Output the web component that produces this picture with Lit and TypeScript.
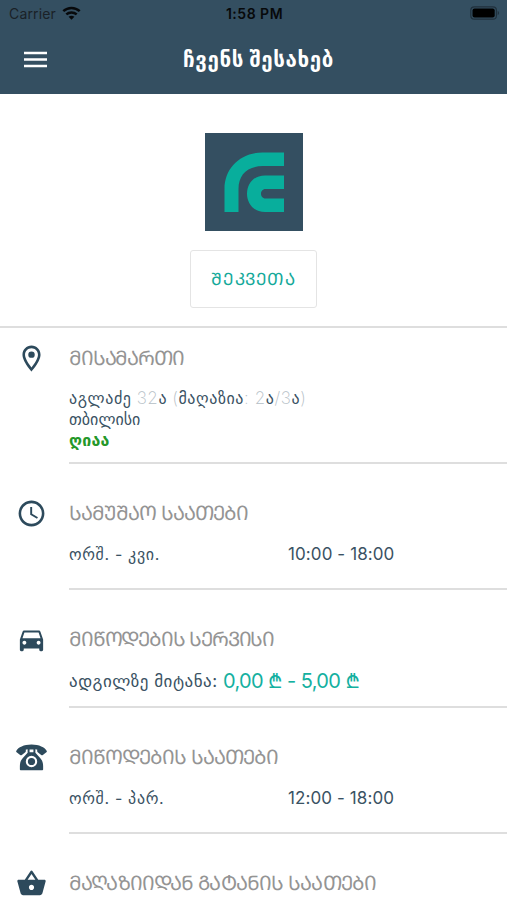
import { LitElement, html, css, svg } from "lit";
import { customElement, property } from "lit/decorators.js";

const ICONS: Record<string, unknown> = {
  pin: svg`<path d="M12 2C8.130 2 5 5.130 5 9c0 5.250 7 13 7 13s7-7.750 7-13c0-3.870-3.130-7-7-7zM7 9c0-2.760 2.240-5 5-5s5 2.240 5 5c0 2.880-2.880 7.190-5 9.880C9.920 16.210 7 11.850 7 9z"/><circle cx="12" cy="9" r="2.500"/>`,
  clock: svg`<path d="M11.990 2C6.470 2 2 6.480 2 12s4.470 10 9.990 10C17.520 22 22 17.520 22 12S17.520 2 11.990 2zM12 20c-4.420 0-8-3.580-8-8s3.580-8 8-8 8 3.580 8 8-3.580 8-8 8zm.5-13H11v6l5.250 3.150.75-1.230-4.500-2.670z"/>`,
  car: svg`<path d="M18.920 6.010C18.720 5.420 18.160 5 17.500 5h-11c-.66 0-1.210.42-1.420 1.010L3 12v8c0 .55.45 1 1 1h1c.55 0 1-.45 1-1v-1h12v1c0 .55.45 1 1 1h1c.55 0 1-.45 1-1v-8l-2.080-5.990zM6.500 16c-.83 0-1.500-.67-1.500-1.500S5.670 13 6.500 13s1.500.67 1.500 1.500S7.330 16 6.500 16zm11 0c-.83 0-1.500-.67-1.500-1.500s.67-1.500 1.500-1.500 1.500.67 1.500 1.500-.67 1.500-1.500 1.500zM5 11l1.500-4.500h11L19 11H5z"/>`,
  phone: svg`<path fill-rule="evenodd" d="M12 2C6 2 1.700 4.300.3 6.800c-.3.500-.2.900.2 1.200l2.700 2.100c.4.300.9.300 1.300 0l2.700-2.100c.3-.3.400-.6.400-1V5.900c.5-.1.900-.2 1.400-.3v2.800L5.300 12.400C3.600 14.200 3 16.300 3 18.500V21c0 .6.300.9.900.9h16.200c.6 0 .9-.3.900-.9v-2.500c0-2.200-.6-4.300-2.300-6.100L15 8.400V5.600c.5.100.9.200 1.400.3V7c0 .4.100.7.400 1l2.700 2.100c.4.300.9.300 1.300 0L23.500 8c.4-.3.500-.7.200-1.200C22.300 4.300 18 2 12 2zM10.500 5.800h3v2.200h-3zM12 10.700a4.400 4.400 0 1 1 0 8.800 4.400 4.400 0 0 1 0-8.800zm0 1.600a2.800 2.800 0 1 0 0 5.600 2.800 2.800 0 0 0 0-5.600z"/><circle cx="12" cy="15.100" r="1.300"/>`,
  basket: svg`<path d="M17.210 9l-4.380-6.560c-.19-.28-.51-.42-.83-.42-.32 0-.64.14-.83.430L6.790 9H2c-.55 0-1 .45-1 1 0 .09.010.18.040.27l2.540 9.270c.23.840 1 1.460 1.920 1.460h13c.92 0 1.690-.62 1.930-1.460l2.540-9.270L23 10c0-.55-.45-1-1-1h-4.790zM9 9l3-4.400L15 9H9zm3 8c-1.100 0-2-.9-2-2s.9-2 2-2 2 .9 2 2-.9 2-2 2z"/>`,
};

@customElement("info-section")
class InfoSection extends LitElement {
  @property() icon = "";
  @property() heading = "";

  static styles = css`
    :host { display: flex; flex: none; box-sizing: border-box; padding-top: 36px; }
    .icon { flex: none; width: 31px; height: 31px; margin: -2px 22px 0 16px; fill: #2d4a5c; }
    .main { flex: 1; min-width: 0; box-sizing: border-box; border-bottom: 2px solid #dedede; }
    .heading { height: 26px; line-height: 26px; font-size: 20px; color: #949494; white-space: nowrap; letter-spacing: var(--heading-spacing, 0); }
  `;

  render() {
    return html`
      <svg class="icon" viewBox="0 0 24 24">${ICONS[this.icon]}</svg>
      <div class="main">
        <div class="heading">${this.heading}</div>
        <slot></slot>
      </div>
    `;
  }
}

@customElement("app-root")
class AppRoot extends LitElement {
  static styles = css`
    :host { display: flex; flex-direction: column; height: 900px; overflow: hidden; background: #fff; color: #3a5263; font-family: Inter, "DejaVu Sans", sans-serif; font-size: 16px; }
    .status { flex: none; display: grid; grid-template-columns: 1fr auto 1fr; align-items: center; height: 28px; padding: 0 7px 2px 9px; box-sizing: border-box; background: #344f61; color: #07090b; font-size: 14px; }
    .carrier { display: flex; align-items: center; gap: 6px; letter-spacing: 0.15px; color: #1a2127; }
    .wifi { width: 19px; height: 14px; }
    .time { font-weight: 600; font-size: 14px; letter-spacing: 0.5px; }
    .battery { justify-self: end; width: 30px; height: 14px; }
    .bar { flex: none; display: grid; grid-template-columns: 60px 1fr 60px; align-items: center; height: 66px; box-sizing: border-box; padding-bottom: 3px; background: #344f61; color: #fff; }
    .menu { width: 23px; height: 17px; margin-left: 24px; }
    .title { text-align: center; padding-left: 10px; font-size: 20.5px; letter-spacing: 0.6px; font-weight: 700; white-space: nowrap; }
    .hero { display: flex; flex-direction: column; align-items: center; height: 234px; flex: none; box-sizing: border-box; padding-top: 39px; border-bottom: 2px solid #dedede; }
    .logo { width: 98px; height: 98px; }
    .order { display: flex; align-items: center; justify-content: center; width: 127px; height: 58px; margin-top: 19px; border: 1px solid #e4e4e4; border-radius: 3px; background: #fff; padding: 0 0 2px; font: inherit; font-size: 17px; letter-spacing: 0.6px; color: #14a99a; box-sizing: border-box; }
    .address { height: 136px; padding-top: 17px; --heading-spacing: -1.15px; }
    .hours { height: 126px; }
    .working { --heading-spacing: -0.95px; }
    .delivery { --heading-spacing: -1px; }
    .service { height: 118px; --heading-spacing: -1.15px; }
    .last { height: 126px; --heading-spacing: -0.85px; }
    .lines { padding-top: 17px; line-height: 21px; white-space: nowrap; }
    .street { letter-spacing: 0.58px; }
    .faint { color: #b4bec6; font-weight: 200; font-size: 17px; }
    .open { color: #25982a; font-weight: 700; letter-spacing: 0.2px; }
    .slot { display: flex; padding-top: 16px; line-height: 24px; white-space: nowrap; }
    .days { width: 219px; letter-spacing: 0.65px; }
    .clock { font-size: 17px; letter-spacing: 0.1px; }
    .fee { padding-top: 17px; }
    .label { font-size: 17px; letter-spacing: 0.5px; }
    .price { font-size: 20px; letter-spacing: -0.6px; color: #14b0a0; }
  `;

  render() {
    return html`
      <div class="status">
        <div class="carrier">Carrier
          <svg class="wifi" viewBox="0 0 19 14"><g fill="none" stroke="#07090b" stroke-width="2.500"><path d="M1.300 5.200C6 .8 13 .8 17.700 5.200"/><path d="M4.300 8.400c3-2.700 7.400-2.700 10.400 0"/></g><path d="M9.500 13.700 6.600 10.800c1.700-1.500 4.100-1.500 5.800 0z" fill="#07090b"/></svg>
        </div>
        <div class="time">1:58 PM</div>
        <svg class="battery" viewBox="0 0 30 14"><rect x=".8" y=".8" width="25.600" height="12.400" rx="3.500" fill="none" stroke="#20313d" stroke-width="1.200"/><rect x="2.500" y="2.500" width="22.200" height="9" rx="2" fill="#000"/><path d="M27.700 4.800c1.800.8 1.800 3.600 0 4.400z" fill="#20313d"/></svg>
      </div>
      <div class="bar">
        <svg class="menu" viewBox="0 0 23 17"><path d="M0 2h23M0 8.500h23M0 15h23" stroke="#fff" stroke-width="2.600"/></svg>
        <div class="title">ჩვენს შესახებ</div>
      </div>
      <div class="hero">
        <svg class="logo" viewBox="0 0 98 98"><path fill="#344f61" d="M0 0h98v98H0z"/><path fill="#08ae9c" d="M79 19.500v13.500H58C42 33 33.500 42 33.500 56v23H19.500V56c0-21 16-36.500 38-36.500zM79 42.500V56H60.500c-6 0-6 9.500 0 9.500H79V79H60c-24 0-24-36.500 0-36.500z"/></svg>
        <button class="order">ᲨᲔᲙᲕᲔᲗᲐ</button>
      </div>
      <info-section class="address" icon="pin" heading="ᲛᲘᲡᲐᲛᲐᲠᲗᲘ">
        <div class="lines">
          <div class="street">აგლაძე <span class="faint">32</span>ა <span class="faint">(</span>მაღაზია<span class="faint">: 2</span>ა<span class="faint">/3</span>ა<span class="faint">)</span></div>
          <div>თბილისი</div>
          <div class="open">ღიაა</div>
        </div>
      </info-section>
      <info-section class="hours working" icon="clock" heading="ᲡᲐᲛᲣᲨᲐᲝ ᲡᲐᲐᲗᲔᲑᲘ">
        <div class="slot"><span class="days">ორშ. - კვი.</span><span class="clock">10:00 - 18:00</span></div>
      </info-section>
      <info-section class="service" icon="car" heading="ᲛᲘᲬᲝᲓᲔᲑᲘᲡ ᲡᲔᲠᲕᲘᲡᲘ">
        <div class="slot fee"><span class="label">ადგილზე მიტანა:&nbsp;</span><span class="price">0,00 ₾ - 5,00 ₾</span></div>
      </info-section>
      <info-section class="hours delivery" icon="phone" heading="ᲛᲘᲬᲝᲓᲔᲑᲘᲡ ᲡᲐᲐᲗᲔᲑᲘ">
        <div class="slot"><span class="days">ორშ. - პარ.</span><span class="clock">12:00 - 18:00</span></div>
      </info-section>
      <info-section class="last" icon="basket" heading="ᲛᲐᲦᲐᲖᲘᲘᲓᲐᲜ ᲒᲐᲢᲐᲜᲘᲡ ᲡᲐᲐᲗᲔᲑᲘ"></info-section>
    `;
  }
}
